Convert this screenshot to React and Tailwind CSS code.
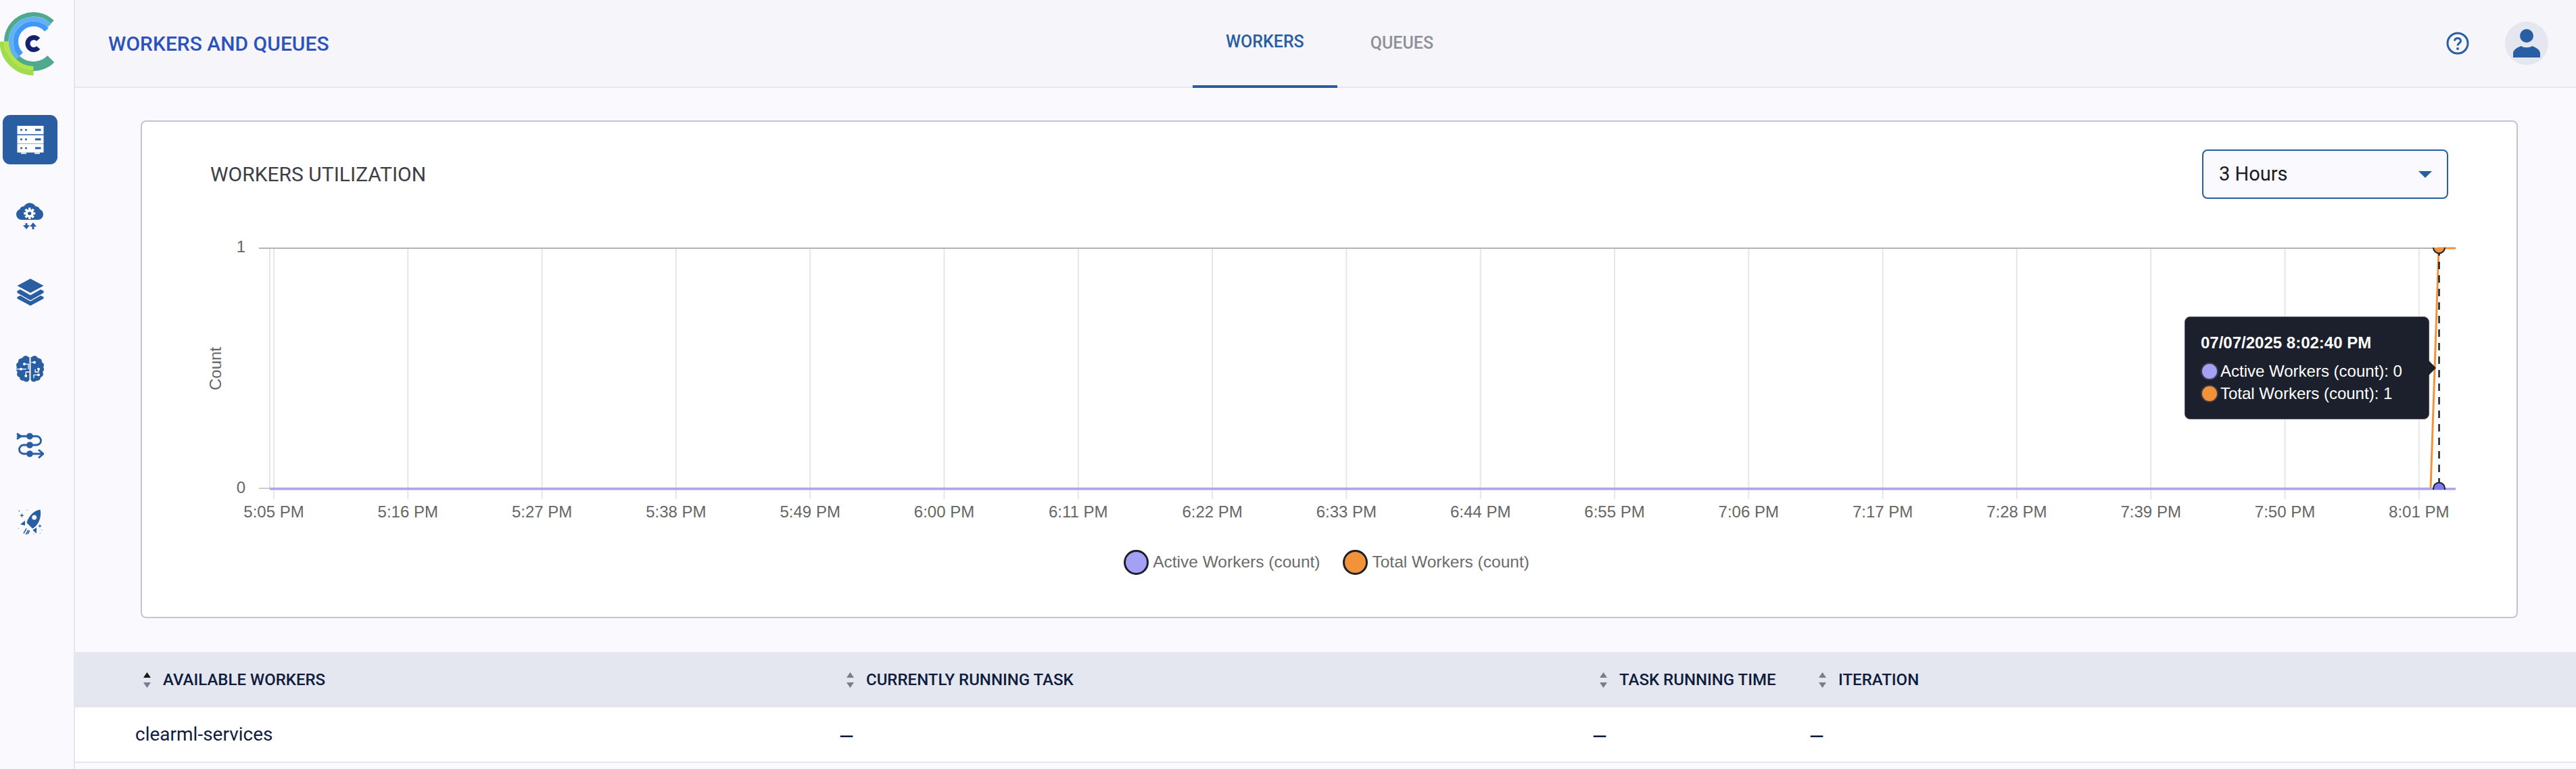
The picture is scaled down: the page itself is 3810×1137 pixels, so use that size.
import React from "react";

const ticks = ["5:05 PM","5:16 PM","5:27 PM","5:38 PM","5:49 PM","6:00 PM","6:11 PM","6:22 PM","6:33 PM","6:44 PM","6:55 PM","7:06 PM","7:17 PM","7:28 PM","7:39 PM","7:50 PM","8:01 PM"];

const arc = (cx, cy, r, a0, a1) => {
  const rad = (a) => (a * Math.PI) / 180;
  const x0 = cx + r * Math.cos(rad(a0));
  const y0 = cy - r * Math.sin(rad(a0));
  const x1 = cx + r * Math.cos(rad(a1));
  const y1 = cy - r * Math.sin(rad(a1));
  const large = Math.abs(a1 - a0) > 180 ? 1 : 0;
  return `M${x0} ${y0}A${r} ${r} 0 ${large} 0 ${x1} ${y1}`;
};

const Logo = () => (
  <svg width="90" height="120" viewBox="0 0 90 120" fill="none">
    <path d={arc(49.5, 61.5, 40.25, 46, 180)} stroke="#4fa98d" strokeWidth="6.5" />
    <path d={arc(49.5, 61.5, 36.5, 200, 315)} stroke="#4fa98d" strokeWidth="14" />
    <path d={arc(49.5, 61.5, 33.5, 45, 226)} stroke="#62b1f5" strokeWidth="7" />
    <path d={arc(49.5, 61.5, 26.2, 42, 226)} stroke="#4199f7" strokeWidth="7.5" />
    <path d={arc(49.5, 61.5, 46.6, 180, 270)} stroke="#9fdd4c" strokeWidth="6.8" />
    <path d={arc(49.5, 61.5, 39.8, 180, 270)} stroke="#b5e34a" strokeWidth="6.5" />
    <path d={arc(50, 64.5, 9, 42, 318)} stroke="#14216e" strokeWidth="7" />
  </svg>
);

const ServerIcon = () => (
  <svg width="40" height="42" viewBox="0 0 40 42">
    {[0, 14, 27].map((y) => (
      <g key={y}>
        <rect x="0.5" y={y} width="39" height="12.5" fill="#fff" />
        <circle cx="6.5" cy={y + 6} r="1.6" fill="#295ea2" />
        <circle cx="13.5" cy={y + 6} r="1.6" fill="#295ea2" />
        <rect x="27" y={y + 4.5} width="8.5" height="3" fill="#295ea2" />
      </g>
    ))}
    <rect x="6" y="39.5" width="8" height="2" fill="#fff" />
    <rect x="26" y="39.5" width="8" height="2" fill="#fff" />
  </svg>
);

const CloudIcon = () => (
  <svg width="41" height="40" viewBox="0 0 41 40" fill="#295ea2">
    <circle cx="20" cy="10" r="10" />
    <circle cx="8" cy="17" r="8" />
    <circle cx="32" cy="17" r="8" />
    <circle cx="11" cy="11" r="6" />
    <circle cx="29" cy="11" r="6" />
    <rect x="8" y="12" width="24" height="13" />
    {[0, 45, 90, 135].map((a) => (
      <rect key={a} x="18" y="7" width="3.5" height="17" fill="#fff" transform={`rotate(${a} 19.7 15.5)`} />
    ))}
    <circle cx="19.7" cy="15.5" r="6" fill="#fff" />
    <circle cx="19.7" cy="15.5" r="2.6" />
    <path d="M13.5 30h3v3h3.5l-5 6-5-6h3.5z" />
    <path d="M23.5 39h3v-4h3.5l-5-6-5 6h3.5z" />
  </svg>
);

const LayersIcon = () => (
  <svg width="40" height="41" viewBox="0 0 40 41" fill="#295ea2">
    <path d="M20 0 39.5 10.5 20 21 .5 10.5z" />
    <path d="M.5 18 5 16 20 24.5 35 16 39.5 18V21L20 32 .5 21z" />
    <path d="M.5 27 5 25 20 33.5 35 25 39.5 27V29.5L20 40 .5 29.5z" />
  </svg>
);

const BrainIcon = () => (
  <svg width="41" height="39" viewBox="0 0 41 39" fill="#295ea2">
    {[[14, 4.5, 4.5], [7.5, 8.5, 4.5], [4.5, 14, 4.5], [4, 20, 4], [6, 27, 5], [10, 32, 5], [15, 34, 4.5], [13, 12, 10], [11, 25, 9], [16, 19, 4]].map(([x, y, r], i) => (
      <g key={i}>
        <circle cx={x} cy={y} r={r} />
        <circle cx={41 - x} cy={y} r={r} />
      </g>
    ))}
    <rect x="14" y="2" width="13" height="34" />
    <g fill="none" stroke="#fff" strokeWidth="1.3">
      <path d="M20.5 0V39" strokeWidth="2" />
      <path d="M12 12.3H18V20" />
      <path d="M0 19.7H15" />
      <path d="M14.3 29.7V24H20" />
      <path d="M27 9.7H22.5" />
      <path d="M33 19.7V24H28V20" />
      <path d="M33 28.3H26V33" />
    </g>
    <g fill="#fff">
      <circle cx="12" cy="12.3" r="2" />
      <circle cx="7" cy="19.7" r="2" />
      <circle cx="14.3" cy="29.7" r="2" />
      <circle cx="27" cy="9.7" r="2" />
      <circle cx="33" cy="19.7" r="2" />
      <circle cx="33" cy="28.3" r="2" />
    </g>
  </svg>
);

const PipelineIcon = () => (
  <svg width="41" height="38" viewBox="0 0 41 38" fill="none" stroke="#295ea2" strokeWidth="2.8">
    <path d="M1 5H30A6.5 6.5 0 0 1 30 18H11A6.5 6.5 0 0 0 11 31H39" />
    <path d="M1 1 7 5 1 9" />
    <path d="M33 25 40 31 33 37" />
    <g fill="#295ea2" stroke="none">
      <circle cx="20" cy="5" r="4.8" />
      <circle cx="20" cy="18" r="4.8" />
      <circle cx="20" cy="31" r="4.8" />
    </g>
  </svg>
);

const Sparkle = ({ x, y, s }) => (
  <path d={`M${x} ${y - s}L${x + s * 0.25} ${y - s * 0.25}L${x + s} ${y}L${x + s * 0.25} ${y + s * 0.25}L${x} ${y + s}L${x - s * 0.25} ${y + s * 0.25}L${x - s} ${y}L${x - s * 0.25} ${y - s * 0.25}z`} />
);

const RocketIcon = () => (
  <svg width="38" height="38" viewBox="0 0 38 38" fill="#295ea2">
    <path d="M33.5 .5C24 2 16 10 13.5 20L22 28.5C31 24 36 11 33.5 .5z" />
    <circle cx="24.7" cy="12" r="3.5" fill="#f9f9fe" />
    <path d="M4 22.3 11 16.7V24z" />
    <path d="M22.3 30.7 28.3 26.7 27.7 35.7z" />
    <path d="M9 35.7 13 28.3M12.3 37.3 15.7 30.7M15 36.7 17.7 31.3" stroke="#295ea2" strokeWidth="1.6" fill="none" />
    <Sparkle x={6.3} y={9} s={3.5} />
    <Sparkle x={33} y={24.7} s={3} />
    <Sparkle x={2.3} y={2.3} s={1.5} />
    <Sparkle x={14} y={1.3} s={1} />
    <Sparkle x={1.3} y={28.3} s={0.8} />
    <Sparkle x={35.7} y={30.7} s={1} />
    <Sparkle x={33.3} y={35.7} s={0.8} />
    <Sparkle x={24} y={36.7} s={0.8} />
  </svg>
);

const navIcons = [CloudIcon, LayersIcon, BrainIcon, PipelineIcon, RocketIcon];

const Sidebar = () => (
  <aside className="w-[111px] shrink-0 border-r-2 border-[#e4e7ef] bg-[#f9f9fe]">
    <div className="h-[170px]">
      <Logo />
    </div>
    <div className="flex flex-col gap-[40px]">
      <div className="ml-1 flex h-[73px] w-[81px] items-center justify-center rounded-[11px] bg-[#295ea2]">
        <ServerIcon />
      </div>
      {navIcons.map((Icon, i) => (
        <div key={i} className="ml-1 flex h-[73px] w-[81px] items-center justify-center">
          <Icon />
        </div>
      ))}
    </div>
  </aside>
);

const TopBar = () => (
  <header className="flex h-[130px] shrink-0 items-start border-b-2 border-[#e4e7ef] bg-[#f5f5fa]">
    <div className="flex h-[128px] w-[1653px] items-center pl-[49px] text-[30px] font-medium text-[#2c53bd]">WORKERS AND QUEUES</div>
    <div className="flex h-[130px] items-center border-b-4 border-[#295ea2] px-[49px] pb-[2px] text-[25px] font-medium text-[#295ea2]">WORKERS</div>
    <div className="flex h-[130px] items-center px-[49px] pb-[2px] text-[25px] font-medium text-[#8f8f98]">QUEUES</div>
    <div className="ml-auto flex h-[128px] items-center gap-[53px] pr-[41px]">
      <svg width="34" height="34" viewBox="0 0 34 34" fill="none">
        <circle cx="17" cy="17" r="15" stroke="#295ea2" strokeWidth="3" />
        <path d="M12.5 13.5C12.5 8 21.5 8 21.5 13.5C21.5 17 17 16.5 17 20.5" stroke="#295ea2" strokeWidth="3" />
        <circle cx="17" cy="25" r="2" fill="#295ea2" />
      </svg>
      <div className="flex h-16 w-16 items-center justify-center rounded-full bg-[#e4e7ef]">
        <svg width="40" height="42" viewBox="0 0 40 42" fill="#295ea2">
          <circle cx="20" cy="10" r="10" />
          <path d="M0 42V36C0 30 7 27 12 25C15 28 25 28 28 25C33 27 40 30 40 36V42z" />
        </svg>
      </div>
    </div>
  </header>
);

const Chart = () => (
  <div className="relative mt-[46px] h-[440px]">
    <svg className="block" width="3512" height="440" viewBox="210 340 3512 440" fontFamily="'Liberation Sans', Arial, sans-serif" fontSize="24" fill="#666">
      <defs>
        <clipPath id="plot">
          <rect x="383" y="366" width="3250" height="358" />
        </clipPath>
      </defs>
      <line x1="399" x2="399" y1="367" y2="722" stroke="#e6e6e6" strokeWidth="2" />
      {ticks.map((t, i) => (
        <g key={t}>
          <line x1={405 + i * 198.3} x2={405 + i * 198.3} y1="367" y2="738" stroke="#e6e6e6" strokeWidth="2" />
          <text x={405 + i * 198.3} y="765" textAnchor="middle">{t}</text>
        </g>
      ))}
      <line x1="383" x2="3632" y1="367" y2="367" stroke="#b3b3b3" strokeWidth="2" />
      <line x1="383" x2="3632" y1="722" y2="722" stroke="#cccccc" strokeWidth="2" />
      <text x="363" y="373" textAnchor="end">1</text>
      <text x="363" y="729" textAnchor="end">0</text>
      <text transform="translate(327 545) rotate(-90)" textAnchor="middle">Count</text>
      <line x1="399" x2="3595" y1="721" y2="721" stroke="#e8c9b4" strokeWidth="1" />
      <path d="M3595 722 3607 367H3632" fill="none" stroke="#f2933a" strokeWidth="3" />
      <line x1="399" x2="3632" y1="723" y2="723" stroke="#a4a0f5" strokeWidth="3" />
      <line x1="3607.5" x2="3607.5" y1="367" y2="722" stroke="#1c202c" strokeWidth="2.5" strokeDasharray="11 9" />
      <g clipPath="url(#plot)" stroke="#1c202c" strokeWidth="2">
        <circle cx="3607.5" cy="366" r="8.5" fill="#f2933a" />
        <circle cx="3607.5" cy="722" r="8.5" fill="#7c78ee" />
      </g>
    </svg>
    <div className="absolute left-[3021px] top-[128px] flex h-[152px] w-[362px] flex-col rounded-lg border border-[#50535c] bg-[#1c202c] pl-[23px] pt-[24px] font-['Liberation_Sans',Arial,sans-serif] text-2xl text-white">
      <div className="h-[28px] font-bold leading-[28px]">07/07/2025 8:02:40 PM</div>
      <div className="mt-[11px] flex h-[33px] items-center gap-[3px] leading-[33px]">
        <span className="h-[26px] w-[26px] rounded-full border-2 border-[#3a3d48] bg-[#a4a0f5]" />
        Active Workers (count): 0
      </div>
      <div className="flex h-[33px] items-center gap-[3px] leading-[33px]">
        <span className="h-[26px] w-[26px] rounded-full border-2 border-[#3a3d48] bg-[#f2933a]" />
        Total Workers (count): 1
      </div>
      <span className="absolute left-[360px] top-[64px] h-0 w-0 border-y-[11px] border-l-[11px] border-y-transparent border-l-[#1c202c]" />
    </div>
  </div>
);

const LegendItem = ({ color, label }) => (
  <div className="flex items-center gap-[6px]">
    <span className={`h-[37px] w-[37px] rounded-full border-[3px] border-[#1c202c] ${color}`} />
    <span>{label}</span>
  </div>
);

const WorkersCard = () => (
  <section className="ml-[97px] mr-[86px] mt-[48px] h-[736px] shrink-0 rounded-lg border-2 border-[#c3c6ce] bg-white">
    <div className="mt-[41px] flex h-[73px] items-center justify-between pl-[101px] pr-[101px]">
      <h2 className="text-[30px] font-normal text-[#3e3e46]">WORKERS UTILIZATION</h2>
      <div className="flex h-[73px] w-[364px] items-center justify-between rounded-lg border-2 border-[#295ea2] bg-[#f9f9fe] pl-[23px] pr-[22px] text-[29px] text-[#1a1a22]">
        <span>3 Hours</span>
        <span className="h-0 w-0 border-x-[10px] border-t-[10px] border-x-transparent border-t-[#295ea2]" />
      </div>
    </div>
    <Chart />
    <div className="mt-[33px] flex justify-center gap-[34px] pr-2 font-['Liberation_Sans',Arial,sans-serif] text-[24.5px] text-[#6b6b6b]">
      <LegendItem color="bg-[#a4a0f5]" label="Active Workers (count)" />
      <LegendItem color="bg-[#f2933a]" label="Total Workers (count)" />
    </div>
  </section>
);

const SortIcon = ({ active }) => (
  <svg width="11" height="23" viewBox="0 0 11 23" className="shrink-0">
    <path d="M5.5 0 11 8H0z" fill={active ? "#1a1a1a" : "#7a7d88"} />
    <path d="M0 15H11L5.5 23z" fill="#7a7d88" />
  </svg>
);

const columns = "grid grid-cols-[1130px_1114px_324px_1fr]";

const HeadCell = ({ label, active }) => (
  <div className="flex items-center gap-[18px] pl-[11px]">
    <SortIcon active={active} />
    <span>{label}</span>
  </div>
);

const WorkersTable = () => (
  <div className="mt-[50px]">
    <div className={`${columns} h-[82px] bg-[#e4e7ef] text-2xl font-medium text-[#0f1c3d]`}>
      <div className="flex items-center pl-[101px]">
        <div className="flex items-center gap-[18px]">
          <SortIcon active />
          <span>AVAILABLE WORKERS</span>
        </div>
      </div>
      <HeadCell label="CURRENTLY RUNNING TASK" />
      <HeadCell label="TASK RUNNING TIME" />
      <HeadCell label="ITERATION" />
    </div>
    <div className={`${columns} h-[82px] items-center border-b-2 border-[#e4e7ef] bg-white text-[28px] text-[#0f1c3d]`}>
      <div className="pl-[89px]">clearml-services</div>
      <div className="pt-2 font-medium">—</div>
      <div className="pt-2 font-medium">—</div>
      <div className="-ml-[3px] pt-2 font-medium">—</div>
    </div>
  </div>
);

export default function App() {
  return (
    <div className="flex h-[1137px] w-[3810px] overflow-hidden bg-[#f9f9fe] font-['Roboto',sans-serif]">
      <Sidebar />
      <main className="flex min-w-0 flex-1 flex-col">
        <TopBar />
        <WorkersCard />
        <WorkersTable />
      </main>
    </div>
  );
}
